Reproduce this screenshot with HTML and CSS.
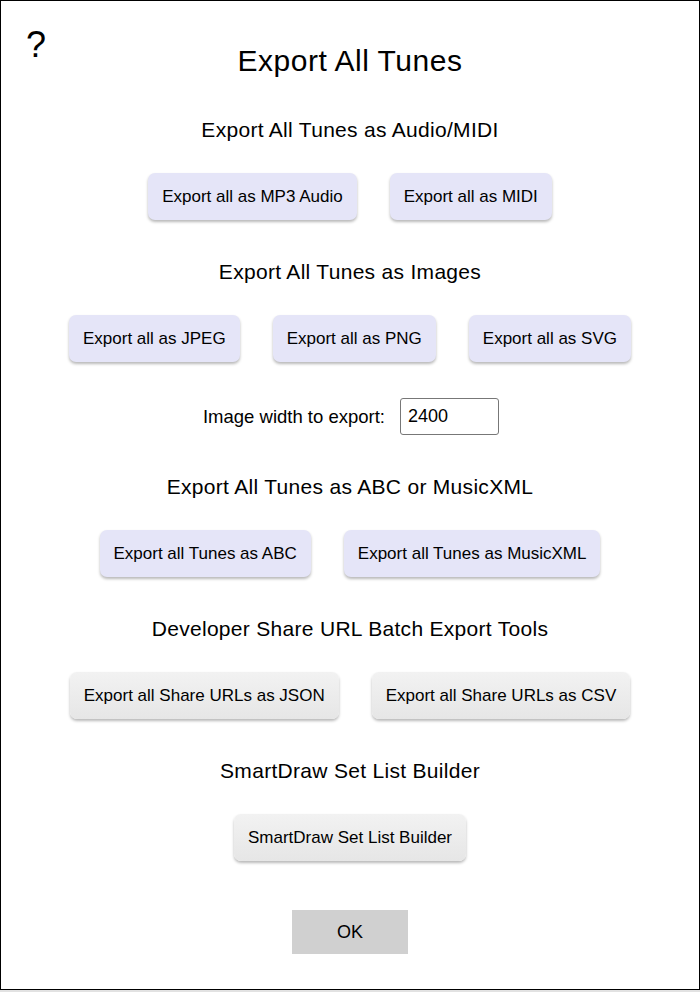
FILE: index.html
```html
<!DOCTYPE html>
<html lang="en">
<head>
<meta charset="utf-8">
<title>Export All Tunes</title>
<link rel="stylesheet" href="styles.css">
</head>
<body>
<div class="dialog">
  <div class="help">?</div>
  <h1 class="title">Export All Tunes</h1>

  <section class="section first">
    <h2 class="heading">Export All Tunes as Audio/MIDI</h2>
    <div class="row">
      <button class="btn">Export all as MP3 Audio</button>
      <button class="btn">Export all as MIDI</button>
    </div>
  </section>

  <section class="section">
    <h2 class="heading">Export All Tunes as Images</h2>
    <div class="row">
      <button class="btn">Export all as JPEG</button>
      <button class="btn">Export all as PNG</button>
      <button class="btn">Export all as SVG</button>
    </div>
    <div class="width-row">
      <label class="width-label" for="w">Image width to export:</label>
      <input class="width-input" id="w" type="text" value="2400">
    </div>
  </section>

  <section class="section">
    <h2 class="heading">Export All Tunes as ABC or MusicXML</h2>
    <div class="row">
      <button class="btn">Export all Tunes as ABC</button>
      <button class="btn">Export all Tunes as MusicXML</button>
    </div>
  </section>

  <section class="section">
    <h2 class="heading">Developer Share URL Batch Export Tools</h2>
    <div class="row">
      <button class="btn gray">Export all Share URLs as JSON</button>
      <button class="btn gray">Export all Share URLs as CSV</button>
    </div>
  </section>

  <section class="section">
    <h2 class="heading">SmartDraw Set List Builder</h2>
    <div class="row">
      <button class="btn gray">SmartDraw Set List Builder</button>
    </div>
  </section>

  <div class="ok-row">
    <button class="ok">OK</button>
  </div>
</div>
</body>
</html>
```

FILE: styles.css
```css
html {
  background: #e2e2e2;
}
body {
  margin: 0;
  font-family: "Liberation Sans", Arial, sans-serif;
  color: #000;
}
.dialog {
  position: relative;
  box-sizing: border-box;
  width: 700px;
  height: 990px;
  border: 1px solid #000;
  background: #fff;
  padding-top: 44px;
}
.help {
  position: absolute;
  left: 25px;
  top: 24px;
  font-size: 36px;
  line-height: 40px;
}
.title {
  margin: 0;
  font-size: 30px;
  font-weight: normal;
  letter-spacing: 0.5px;
  line-height: 32px;
  text-align: center;
}
.section {
  margin-top: 40px;
}
.section.first {
  margin-top: 41px;
}
.heading {
  margin: 0;
  font-size: 21px;
  font-weight: normal;
  letter-spacing: 0.3px;
  line-height: 24px;
  text-align: center;
}
.row {
  display: flex;
  justify-content: center;
  gap: 33px;
  margin-top: 31px;
}
.btn {
  font-family: "Liberation Sans", Arial, sans-serif;
  font-size: 17px;
  line-height: 19px;
  padding: 14px 14px;
  border: none;
  border-radius: 7px;
  background: #e5e5f8;
  color: #000;
  box-shadow: 0 2px 3px rgba(0, 0, 0, 0.28);
}
.btn.gray {
  background: linear-gradient(#f2f2f2, #e6e6e6);
}
.width-row {
  display: flex;
  justify-content: center;
  align-items: center;
  gap: 15px;
  margin-top: 36px;
  padding-left: 2px;
}
.width-label {
  font-size: 18.5px;
}
.width-input {
  box-sizing: border-box;
  width: 99px;
  height: 37px;
  padding: 0 7px;
  border: 1px solid #777;
  border-radius: 3px;
  font-family: "Liberation Sans", Arial, sans-serif;
  font-size: 18px;
  color: #000;
}
.ok-row {
  display: flex;
  justify-content: center;
  margin-top: 49px;
}
.ok {
  width: 116px;
  height: 44px;
  border: none;
  background: #d0d0d0;
  font-family: "Liberation Sans", Arial, sans-serif;
  font-size: 18px;
  color: #000;
}
```
